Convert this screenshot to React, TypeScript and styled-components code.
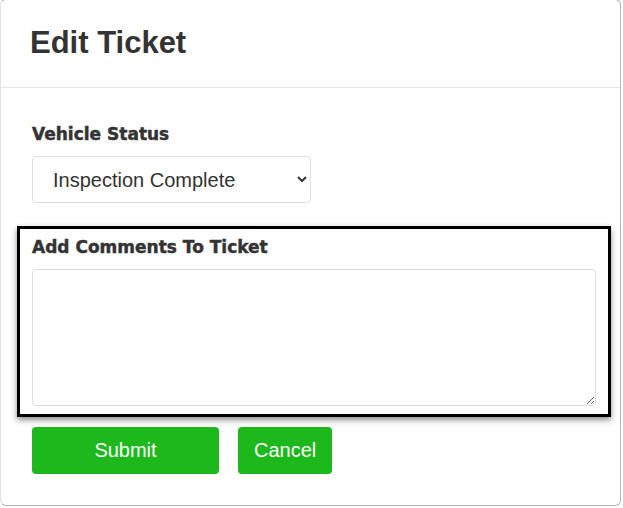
import styled, { createGlobalStyle } from "styled-components";

const GlobalStyle = createGlobalStyle`
  html, body {
    margin: 0;
    padding: 0;
    background: #ffffff;
  }
  * {
    box-sizing: border-box;
  }
`;

const App = () => {
    return (
        <>
            <GlobalStyle />
            <Modal>
                <Header>
                    <Title>Edit Ticket</Title>
                </Header>
                <Body>
                    <Field>
                        <Label>Vehicle Status</Label>
                        <Select defaultValue="complete">
                            <option value="waiting">Waiting For Inspection</option>
                            <option value="progress">Inspection In Progress</option>
                            <option value="complete">Inspection Complete</option>
                        </Select>
                    </Field>
                    <CommentBox>
                        <Label>Add Comments To Ticket</Label>
                        <TextArea />
                    </CommentBox>
                    <Actions>
                        <Button $width="187px">Submit</Button>
                        <Button>Cancel</Button>
                    </Actions>
                </Body>
            </Modal>
        </>
    );
};

const Modal = styled.div`
width: 621px;
height: 507px;
margin-top: -1px;
background: #ffffff;
border: 1px solid #b5b5b5;
border-left-color: #e2e2e2;
border-radius: 6px;
font-family: "Liberation Sans", Arial, sans-serif;
color: #333333;
`

const Header = styled.div`
padding: 24px 30px 26px 29px;
border-bottom: 1px solid #e5e5e5;
`

const Title = styled.h1`
margin: 0;
font-size: 31px;
line-height: 37px;
font-weight: 700;
color: #333333;
`

const Body = styled.div`
padding: 36px 0 0 0;
`

const Field = styled.div`
display: flex;
flex-direction: column;
align-items: flex-start;
padding-left: 31px;
`

const Label = styled.label`
display: block;
font-family: "DejaVu Sans", sans-serif;
font-size: 17px;
font-weight: 700;
color: #333333;
-webkit-text-stroke: 0.45px #333333;
margin-bottom: 12px;
`

const Select = styled.select`
width: 279px;
height: 47px;
padding: 0 12px 0 16px;
font-family: "Liberation Sans", Arial, sans-serif;
font-size: 20px;
color: #333333;
background: #ffffff;
border: 1px solid #dedede;
border-radius: 4px;
`

const CommentBox = styled.div`
margin: 23px 0 0 16px;
width: 594px;
padding: 8px 12px 8px 12px;
border: 3px solid #000000;
box-shadow: 0 3px 6px rgba(0, 0, 0, 0.45);
`

const TextArea = styled.textarea`
display: block;
width: 100%;
height: 137px;
border: 1px solid #dedede;
border-radius: 4px;
background: #ffffff;
font-family: "Liberation Sans", Arial, sans-serif;
font-size: 16px;
`

const Actions = styled.div`
display: flex;
gap: 19px;
padding: 10px 0 0 31px;
`

const Button = styled.button<{ $width?: string }>`
width: ${(p) => p.$width || "auto"};
height: 47px;
padding: 0 16px;
border: none;
border-radius: 4px;
background: #1cb81c;
color: #ffffff;
font-family: "Liberation Sans", Arial, sans-serif;
font-size: 20px;
`

export default App;
